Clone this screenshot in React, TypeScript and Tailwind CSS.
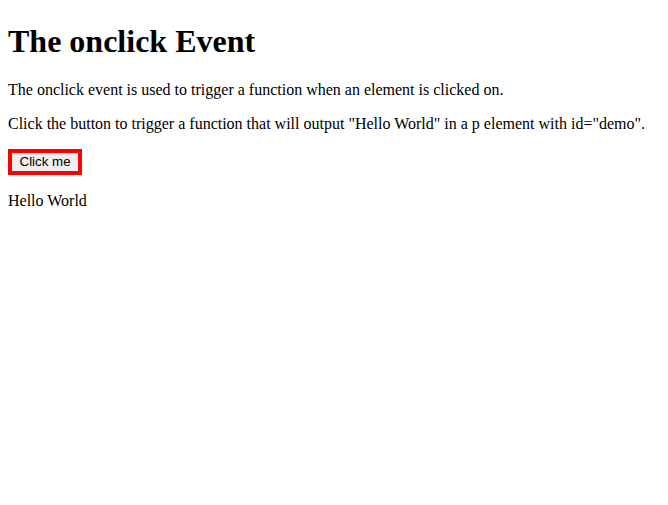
import React, { useState } from "react";

export default function App() {
  const [text, setText] = useState("Hello World");
  return (
    <div className="m-2 text-black bg-white" style={{ fontFamily: '"Liberation Serif", "Times New Roman", serif' }}>
      <h1 className="text-[32px] font-bold leading-[37px] mt-[22.5px] mb-[21.44px]">The onclick Event</h1>
      <p className="text-[16px] leading-[18px] my-4">The onclick event is used to trigger a function when an element is clicked on.</p>
      <p className="text-[16px] leading-[18px] my-4">Click the button to trigger a function that will output "Hello World" in a p element with id="demo".</p>
      <button
        onClick={() => setText("Hello World")}
        className="block border-4 border-[#ff0000] bg-[#efefef] px-[7.5px] py-[1px] text-[13.33px] leading-[16px] text-black"
        style={{ fontFamily: '"Liberation Sans", Arial, sans-serif' }}
      >
        Click me
      </button>
      <p id="demo" className="text-[16px] leading-[18px] mt-[17px] mb-4">{text}</p>
    </div>
  );
}
